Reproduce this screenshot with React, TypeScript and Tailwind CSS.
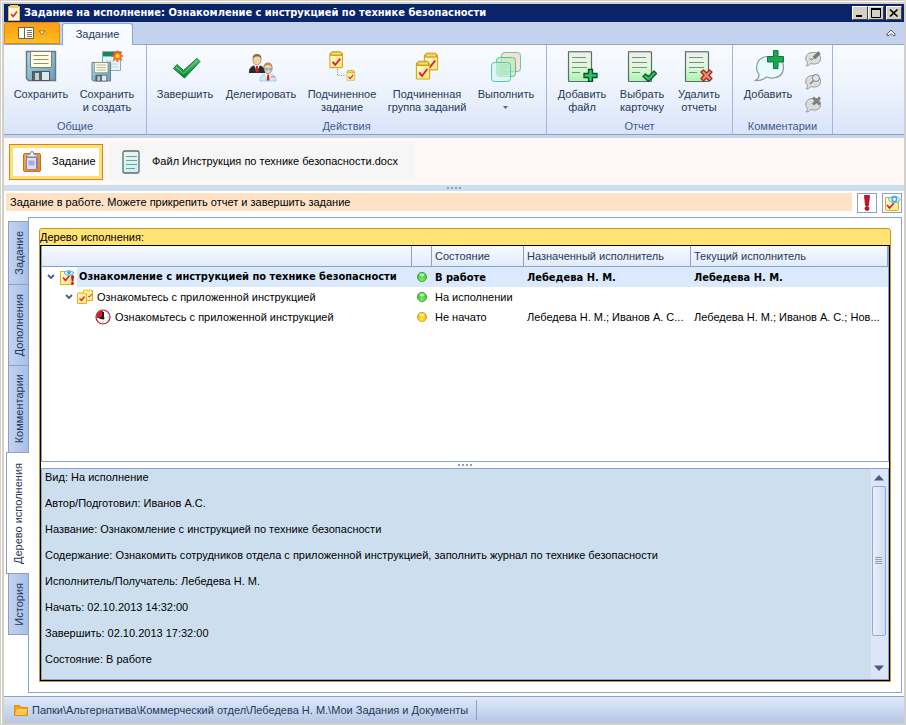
import type { ReactNode } from "react";

const bold = "font-['DejaVu_Sans_Condensed','Noto_Sans',sans-serif] font-bold";

/* ---------- icons ---------- */

function Defs() {
  return (
    <svg width="0" height="0" className="absolute" aria-hidden="true">
      <defs>
        <linearGradient id="steel" x1="0" y1="0" x2="1" y2="1">
          <stop offset="0" stopColor="#a9dcec" />
          <stop offset="0.5" stopColor="#86b9cd" />
          <stop offset="1" stopColor="#6f9fb6" />
        </linearGradient>
        <linearGradient id="paper" x1="0" y1="0" x2="0" y2="1">
          <stop offset="0" stopColor="#eef0ec" />
          <stop offset="0.5" stopColor="#dff9dc" />
          <stop offset="1" stopColor="#a9f5b0" />
        </linearGradient>
        <linearGradient id="paperBlue" x1="0" y1="0" x2="0" y2="1">
          <stop offset="0" stopColor="#eaf3f3" />
          <stop offset="1" stopColor="#c4f3fb" />
        </linearGradient>
        <linearGradient id="gold" x1="0" y1="0" x2="1" y2="1">
          <stop offset="0" stopColor="#fffbd8" />
          <stop offset="1" stopColor="#ffe66e" />
        </linearGradient>
        <linearGradient id="green" x1="0" y1="0" x2="0" y2="1">
          <stop offset="0" stopColor="#55c878" />
          <stop offset="1" stopColor="#07852f" />
        </linearGradient>
        <linearGradient id="bubble" x1="0" y1="0" x2="0" y2="1">
          <stop offset="0" stopColor="#dcfcfa" />
          <stop offset="1" stopColor="#eefaff" />
        </linearGradient>
        <radialGradient id="dotGreen" cx="0.5" cy="0.8" r="0.8">
          <stop offset="0" stopColor="#7cf35a" />
          <stop offset="1" stopColor="#2fb52c" />
        </radialGradient>
        <radialGradient id="dotYellow" cx="0.5" cy="0.8" r="0.8">
          <stop offset="0" stopColor="#ffe93a" />
          <stop offset="1" stopColor="#f0a80c" />
        </radialGradient>
        <linearGradient id="orangeBoard" x1="0" y1="0" x2="1" y2="1">
          <stop offset="0" stopColor="#f7a54e" />
          <stop offset="1" stopColor="#ee8420" />
        </linearGradient>
      </defs>
    </svg>
  );
}

function Svg({ w = 32, h = 32, children }: { w?: number; h?: number; children: ReactNode }) {
  return (
    <svg width={w} height={h} viewBox={`0 0 ${w} ${h}`} fill="none" className="shrink-0" aria-hidden="true">
      {children}
    </svg>
  );
}

function Floppy() {
  return (
    <>
      <path d="M1.5 1.5h29v29H3.5l-2-2z" fill="url(#steel)" stroke="#6b7480" strokeWidth="1.4" />
      <path d="M5.5 1.5h21v16h-21z" fill="#fffcdc" stroke="#76808a" />
      <path d="M8.5 5.5h15M8.5 9.5h15M8.5 13.5h15" stroke="#8d8f86" />
      <path d="M7.5 21.5h17v9h-17z" fill="#57636b" stroke="#4a555d" />
      <path d="M17 22h7v8h-7z" fill="#dfe7ec" />
      <path d="M10 23h4v7h-4z" fill="#c4ced6" />
    </>
  );
}

function SaveIcon() {
  return <Svg><Floppy /></Svg>;
}

function SaveNewIcon() {
  return (
    <Svg>
      <path d="M11.5 1.5h18v19h-18z" fill="#e3f6fb" stroke="#8fa9b7" />
      <path d="M12 2h17v4H12z" fill="#16895a" />
      <path d="M12 6h17v1H12z" fill="#75c9e8" />
      <path d="M15 11h12M15 14h12M15 17h12" stroke="#a9d8e4" />
      <g transform="translate(0 11.5) scale(.64)"><Floppy /></g>
      <path d="M26.500 .5l1.300 2.500 3-1.300-1.200 3 2.400 1.300-2.400 1.300 1.200 3-3-1.200-1.300 2.900-1.300-2.900-3 1.200 1.200-3-3-1.300 3-1.300-1.200-3 3 1.300z" fill="#ff7a12" stroke="#ef3b18" strokeWidth=".6" />
      <circle cx="26.500" cy="6" r="2" fill="#ffd23a" />
    </Svg>
  );
}

function DoneIcon() {
  return (
    <Svg>
      <path d="M4.500 18.500l3.500-4 6.500 6L28 8.500l3 3-15.500 16.500z" fill="url(#green)" stroke="#0c6b2b" strokeLinejoin="round" />
      <path d="M7 17l7.500 6.500L28 10.500" stroke="#7fdc98" strokeWidth="1" opacity=".7" />
    </Svg>
  );
}

function PeopleIcon() {
  return (
    <Svg>
      <path d="M4 22c0-4 3-7 8-7s8 3 8 7v1H4z" fill="#2a2a2e" />
      <path d="M9 15l3 7 3-7z" fill="#fff" />
      <path d="M11 16h2l.6 5L12 23l-1.600-2z" fill="#d81f26" />
      <ellipse cx="12" cy="10" rx="4" ry="5" fill="#f3d2a8" stroke="#8a6a3c" strokeWidth=".6" />
      <path d="M7.500 9c0-4 2-5 4.500-5s4.500 1 4.500 5c-1-2-2-2.500-4.500-2.500S8.500 7 7.500 9z" fill="#8a6a3c" />
      <path d="M15 30c0-4 3-6.500 8-6.500s8 2.500 8 6.500v1H15z" fill="#c9ebf8" stroke="#8fb8cc" strokeWidth=".6" />
      <path d="M20 23.500l3 6 3-6z" fill="#fff" />
      <path d="M22.200 24.500h1.800l.5 6h-2.800z" fill="#d81f26" />
      <path d="M26 26h4v1.500h-4z" fill="#f49b7b" />
      <ellipse cx="23" cy="18.500" rx="4" ry="5" fill="#f3d2a8" stroke="#8a6a3c" strokeWidth=".6" />
      <path d="M18.500 18c0-4 2-5.500 4.500-5.500s4.500 1.500 4.500 5.500c-1-2-2-3-4.500-3s-3.500 1-4.500 3z" fill="#b8904c" />
      <path d="M19.500 18.500h3v1.500h-3zM24 18.500h3v1.500h-3z" stroke="#5fa2c4" strokeWidth=".8" />
    </Svg>
  );
}

// yellow clipboard with a red tick, drawn in a 16x20 box
function Clip() {
  return (
    <>
      <path d="M2.500 2.500h12q1 0 1 1v14q0 1-1 1h-12q-1 0-1-1v-14q0-1 1-1z" fill="url(#gold)" stroke="#d9a520" strokeWidth="1.200" />
      <path d="M4 .7h9q.8 0 1 1l.5 3.300h-12L3 1.700q.2-1 1-1z" fill="#f0c22e" stroke="#b98a12" strokeWidth=".8" />
      <path d="M3.500 2.800h10" stroke="#fbe489" />
      <path d="M4.500 12l3 3.500 5.500-7" stroke="#d21f3c" strokeWidth="2" />
    </>
  );
}

function SubTaskIcon() {
  return (
    <Svg>
      <g transform="translate(2.500 1) scale(.9)"><Clip /></g>
      <path d="M11.500 19v6.500h7" stroke="#77808c" strokeDasharray="1 1.500" />
      <g transform="translate(20 20) scale(.56)"><Clip /></g>
    </Svg>
  );
}

function SubGroupIcon() {
  return (
    <Svg>
      <g transform="translate(12 2.500) scale(.94)"><Clip /></g>
      <g transform="translate(4 10.500) scale(.94 1)"><Clip /></g>
    </Svg>
  );
}

function StackIcon() {
  return (
    <Svg>
      <rect x="11.500" y="2.500" width="19" height="19" rx="3" fill="#fbdcd2" fillOpacity=".9" stroke="#62c9a2" />
      <rect x="6.500" y="7.500" width="19" height="19" rx="3" fill="#b9ecb4" fillOpacity=".7" stroke="#55c39a" />
      <rect x="1.500" y="12.500" width="19" height="19" rx="3" fill="#d5f5f0" fillOpacity=".7" stroke="#55c3ae" />
      <rect x="7.500" y="13.500" width="12" height="12" fill="#8bdca0" fillOpacity=".45" />
    </Svg>
  );
}

function Report({ children }: { children?: ReactNode }) {
  return (
    <Svg>
      <path d="M3.500 1.500h21q1 0 1 1v28q0 1-1 1h-21q-1 0-1-1v-28q0-1 1-1z" fill="url(#paper)" stroke="#5f6a6a" strokeWidth="1.200" />
      <path d="M3 2h22" stroke="#8f9696" />
      <path d="M6 7.500h14M6 12.500h15M6 17.500h15M6 22.500h8" stroke="#7d9080" />
      {children}
    </Svg>
  );
}

const plusPath = "M22.500 19.500h4v4h4.500v4h-4.500v4h-4v-4H18v-4h4.500z";

function AddFileIcon() {
  return <Report><path d={plusPath} fill="#2fc26a" stroke="#05502a" strokeWidth="1.300" /></Report>;
}

function PickCardIcon() {
  return <Report><path d="M17 26.500l2.500-2.500 3 2.500 5.500-5.500 2.500 2.500-8 8z" fill="#39bd62" stroke="#0c5a2c" strokeWidth="1.300" strokeLinejoin="round" /></Report>;
}

function DeleteReportIcon() {
  return (
    <Report>
      <path d="M18.500 21.500l2-1.500 3 3 3-3 2.500 2-3 3.200 3 3.300-2.500 2.500-3-3-3 3-2.500-2.500 3-3.300-3-3z" fill="#f08a70" stroke="#a8281c" strokeWidth="1.300" strokeLinejoin="round" />
    </Report>
  );
}

function AddCommentIcon() {
  return (
    <Svg>
      <path d="M15 6.500h6q10.500 1 10.500 10.500 0 10-10 11-4 .4-7-1Q10 31 3.500 30.500q4-2.500 3.500-6-2.500-3-2.500-7Q5 7.500 15 6.500z" fill="url(#bubble)" stroke="#8d989d" strokeWidth="1.200" />
      <path d="M21.500.5h4.500v6h5.500V12H26v6.500h-4.500V12h-6V6.500h6z" fill="#1fa556" stroke="#0a7a3a" />
    </Svg>
  );
}

function GreyBubble({ children }: { children: ReactNode }) {
  return (
    <Svg w={18} h={17}>
      <path d="M7.500 2.500h4q5 1 5 6 0 5-5.500 5.500-2.500.2-4-.5-2 2.500-5 2.500 1.500-1.500 1.500-3.500Q1.500 10.500 1.700 8 2.500 3 7.500 2.500z" fill="#dcdcdc" stroke="#9b9b9b" />
      {children}
    </Svg>
  );
}

function EditCommentIcon() {
  return (
    <GreyBubble>
      <path d="M10 8l5.500-5.500" stroke="#777" strokeWidth="3.500" />
      <path d="M5.500 8.500l2 1.500L10 8" stroke="#777" />
    </GreyBubble>
  );
}

function FindCommentIcon() {
  return (
    <GreyBubble>
      <circle cx="12" cy="5" r="3.500" fill="#e4e4e4" stroke="#858585" />
      <path d="M9.500 7.500L6 11" stroke="#858585" strokeWidth="1.600" />
    </GreyBubble>
  );
}

function DropCommentIcon() {
  return <GreyBubble><path d="M9 1.500l7 7M16 1.500l-7 7" stroke="#7f7f7f" strokeWidth="3" /></GreyBubble>;
}

function BoardIcon() {
  return (
    <Svg w={20} h={23}>
      <rect x="1.500" y="3.500" width="17" height="18" rx="1.500" fill="url(#orangeBoard)" stroke="#cf6d14" />
      <path d="M4.500 7.500h10v12h-10z" fill="#dfe0f4" stroke="#7f84ad" />
      <path d="M6.500 10.500h6v5h-6z" fill="#a9aed4" />
      <path d="M14 20l1.500-1.500V8" stroke="#7f84ad" />
      <path d="M4.500 7V5.500L8 4q0-2.500 2-2.500T12 4l3.500 1.500V7z" fill="#e8e8ee" stroke="#85858f" />
    </Svg>
  );
}

function DocIcon() {
  return (
    <Svg w={18} h={24}>
      <rect x="1" y="1" width="16" height="22" rx="1.500" fill="url(#paperBlue)" stroke="#5f6a6e" strokeWidth="1.300" />
      <path d="M4 6.500h11M4 10.500h11M4 14.500h11M4 18.500h9" stroke="#6fa387" />
    </Svg>
  );
}

function TitleIcon() {
  return (
    <Svg w={12} h={16}>
      <path d="M.5 1.500h11v14H.5z" fill="#fff6dc" stroke="#e6b84a" />
      <path d="M2 0h8v3H2z" fill="#f3cf5a" />
      <path d="M3 9l2.200 2.500L9 6.500" stroke="#c33a2c" strokeWidth="1.600" />
    </Svg>
  );
}

function Eye() {
  return (
    <>
      <path d="M5 5q4-5 10 0-6 5-10 0z" fill="#e6f7ff" stroke="#58b7e6" />
      <circle cx="10" cy="4.800" r="1.800" fill="#3aa0da" />
    </>
  );
}

function TaskEyeIcon() {
  return (
    <Svg w={16} h={18}>
      <path d="M1.500 3.500h12v13h-12z" fill="url(#gold)" stroke="#e0b023" />
      <path d="M4 9.500l2.500 3 4-5" stroke="#d21f3c" strokeWidth="1.500" />
      <Eye />
      <path d="M12 7.500h3l-.6 6h-1.800z" fill="#c8102e" />
      <circle cx="13.500" cy="15.500" r="1.400" fill="#c8102e" />
    </Svg>
  );
}

function WatchIcon() {
  return (
    <Svg w={18} h={18}>
      <path d="M2.500 3.500h13v12q0 1-1 1h-11q-1 0-1-1z" fill="url(#gold)" stroke="#dcae24" />
      <path d="M4 11l2.500 3L11 9" stroke="#c8203a" strokeWidth="1.600" />
      <path d="M5 5.500q6-7 12.500 0-6.500 7-12.500 0z" fill="#dff4ff" stroke="#58b7e6" />
      <circle cx="11.300" cy="5.200" r="2.300" fill="#fff" stroke="#3aa0da" strokeWidth="1.400" />
    </Svg>
  );
}

function GroupRowIcon() {
  return (
    <Svg w={16} h={16}>
      <path d="M6.500 1.500h9v10h-9z" fill="url(#gold)" stroke="#e0b023" />
      <path d="M7.500.5h6v2h-6z" fill="#f7d640" />
      <path d="M11 7l1.500 1L15 5" stroke="#d21f3c" />
      <path d="M.5 4.500h9v10h-9z" fill="url(#gold)" stroke="#e0b023" />
      <path d="M1.500 3h6v2h-6z" fill="#f7d640" />
      <path d="M2.500 9.500l2 2 3-4" stroke="#d21f3c" strokeWidth="1.300" />
    </Svg>
  );
}

function ClockIcon() {
  return (
    <Svg w={16} h={16}>
      <circle cx="8" cy="8" r="7" fill="#fff" stroke="#b0242c" strokeWidth="1.200" />
      <path d="M8 9V1.500A6.500 6.500 0 0 0 1.500 9z" fill="#c4202a" />
      <path d="M4.500 9H8M8 3v6" stroke="#1c1c1c" strokeWidth="2" />
      <circle cx="8" cy="9" r="1.500" fill="#1c1c1c" />
      <path d="M8 12.500v1M12.500 8h1" stroke="#777" />
    </Svg>
  );
}

function Dot({ color }: { color: "green" | "yellow" }) {
  const green = color === "green";
  return (
    <Svg w={12} h={12}>
      <circle cx="6" cy="6" r="4.600" fill={green ? "url(#dotGreen)" : "url(#dotYellow)"} stroke={green ? "#2c9a2a" : "#d2940c"} strokeWidth=".8" />
      <ellipse cx="6" cy="3.800" rx="2.700" ry="1.600" fill="#fff" fillOpacity=".65" />
    </Svg>
  );
}

function Chevron() {
  return (
    <Svg w={8} h={6}>
      <path d="M1 1l3 3 3-3" stroke="#4c5a86" strokeWidth="1.800" />
    </Svg>
  );
}

function Grip() {
  return (
    <div className="flex gap-0.5">
      {[0, 1, 2, 3].map((i) => (
        <span key={i} className="size-0.5 bg-[#8c9dc8]" />
      ))}
    </div>
  );
}

/* ---------- window parts ---------- */

function TitleBar() {
  const btn =
    "flex h-[14px] w-4 items-center justify-center border border-t-white border-l-white border-r-[#404040] border-b-[#404040] bg-[#d4d0c8]";
  return (
    <header className="flex h-[18px] items-center bg-[#0a246a] pr-0.5 pl-1">
      <TitleIcon />
      <h1 className={`${bold} ml-1 flex-1 truncate text-[11px] leading-[18px] text-white`}>
        Задание на исполнение: Ознакомление с инструкцией по технике безопасности
      </h1>
      <button className={btn} aria-label="Свернуть">
        <Svg w={10} h={10}><path d="M1 8h6" stroke="#000" strokeWidth="2" /></Svg>
      </button>
      <button className={btn} aria-label="Развернуть">
        <Svg w={10} h={10}><path d="M.5 1.500h9v8h-9z" stroke="#000" /><path d="M0 1h10" stroke="#000" strokeWidth="2" /></Svg>
      </button>
      <button className={`${btn} ml-0.5`} aria-label="Закрыть">
        <Svg w={10} h={10}><path d="M1 1.500l7.500 7M8.500 1.500L1 8.500" stroke="#000" strokeWidth="1.700" /></Svg>
      </button>
    </header>
  );
}

function RibbonTabs() {
  return (
    <div className="flex h-[23px] items-end border-b border-[#8ba6cf] bg-[#c3d3ee]">
      <button className="flex h-[22px] w-14 items-center justify-center gap-1 rounded-t-[3px] border border-[#e08708] bg-gradient-to-b from-[#f9a021] via-[#fdab10] to-[#ffc02c]" aria-label="Меню">
        <Svg w={16} h={12}>
          <path d="M.5.5h15v11H.5z" fill="#fff" stroke="#6d5f4d" />
          <path d="M6.500 0v12" stroke="#6d5f4d" />
          <path d="M9 3.500h5M9 5.500h5M9 7.500h5M9 9.500h5" stroke="#6d5f4d" strokeWidth=".9" />
        </Svg>
        <Svg w={8} h={6}><path d="M1 1h6L4 4.500z" fill="#fff" stroke="#7d5a20" strokeWidth=".8" /></Svg>
      </button>
      <button className="-mb-px ml-0.5 h-[22px] w-[71px] rounded-t-[3px] border border-b-0 border-[#8ba6cf] bg-[#f7faff] text-[#1e395b]">
        Задание
      </button>
      <button className="mr-2 ml-auto flex h-[22px] items-center" aria-label="Свернуть ленту">
        <Svg w={10} h={8}>
          <path d="M1 5l4-4 4 4v1.500H7L5 4.500 3 6.500H1z" fill="#fff" stroke="#4c5675" />
        </Svg>
      </button>
    </div>
  );
}

type Action = { lines: string[]; icon: ReactNode; width: string; menu?: boolean };

function RibbonButton({ lines, icon, width, menu }: Action) {
  return (
    <button className={`${width} flex flex-col items-center gap-1.5 leading-[13px] whitespace-nowrap text-[#1e395b]`}>
      {icon}
      <span className="flex flex-col items-center">
        {lines.map((l) => (
          <span key={l}>{l}</span>
        ))}
        {menu && (
          <span className="flex h-[13px] items-center">
            <Svg w={5} h={3}><path d="M0 0h5L2.500 3z" fill="#56627c" /></Svg>
          </span>
        )}
      </span>
    </button>
  );
}

function RibbonGroup({ title, actions, pad, children }: { title: string; actions: Action[]; pad: string; children?: ReactNode }) {
  return (
    <section className="flex flex-col border-r border-[#a3b6da]">
      <div className={`${pad} flex flex-1 pt-[5px]`}>
        {actions.map((a) => (
          <RibbonButton key={a.lines.join()} {...a} />
        ))}
        {children}
      </div>
      <h2 className="mb-px text-center leading-[13px] text-[#3e5a8e]">{title}</h2>
    </section>
  );
}

function Ribbon() {
  return (
    <div className="flex h-[90px] border-b border-[#8ba2c8] bg-gradient-to-b from-[#f9fbff] via-[#edf3fd] to-[#d9e4f9]">
      <RibbonGroup
        title="Общие"
        pad="pl-1 pr-1.5"
        actions={[
          { lines: ["Сохранить"], icon: <SaveIcon />, width: "w-[66px]" },
          { lines: ["Сохранить", "и создать"], icon: <SaveNewIcon />, width: "w-[66px]" },
        ]}
      />
      <RibbonGroup
        title="Действия"
        pad="pr-[3px]"
        actions={[
          { lines: ["Завершить"], icon: <DoneIcon />, width: "w-[76px]" },
          { lines: ["Делегировать"], icon: <PeopleIcon />, width: "w-[76px]" },
          { lines: ["Подчиненное", "задание"], icon: <SubTaskIcon />, width: "w-[86px]" },
          { lines: ["Подчиненная", "группа заданий"], icon: <SubGroupIcon />, width: "w-[84px]" },
          { lines: ["Выполнить"], icon: <StackIcon />, width: "w-[74px]", menu: true },
        ]}
      />
      <RibbonGroup
        title="Отчет"
        pad="pl-[5px] pr-1.5"
        actions={[
          { lines: ["Добавить", "файл"], icon: <AddFileIcon />, width: "w-[60px]" },
          { lines: ["Выбрать", "карточку"], icon: <PickCardIcon />, width: "w-[60px]" },
          { lines: ["Удалить", "отчеты"], icon: <DeleteReportIcon />, width: "w-[54px]" },
        ]}
      />
      <RibbonGroup title="Комментарии" pad="pl-[5px] pr-2.5" actions={[{ lines: ["Добавить"], icon: <AddCommentIcon />, width: "w-[60px]" }]}>
        <div className="ml-1.5 flex flex-col gap-1.5">
          <button aria-label="Изменить комментарий"><EditCommentIcon /></button>
          <button aria-label="Просмотреть комментарий"><FindCommentIcon /></button>
          <button aria-label="Удалить комментарий"><DropCommentIcon /></button>
        </div>
      </RibbonGroup>
    </div>
  );
}

function DocTabs() {
  return (
    <nav className="flex h-[47px] items-center gap-1.5 bg-[#fff8f7] px-[5px]">
      <button className="flex h-[36px] w-[94px] items-center border border-[#c48a2a] bg-[#ffe072] p-[3px] text-black">
        <span className="flex h-full w-full items-center gap-2.5 bg-white pl-[9px]">
          <BoardIcon />
          Задание
        </span>
      </button>
      <button className="flex h-[38px] items-center gap-3 bg-[#f6f6f6] pr-[17px] pl-[13px] text-black">
        <DocIcon />
        Файл Инструкция по технике безопасности.docx
      </button>
    </nav>
  );
}

const sideTabs = [
  { name: "Задание", h: "h-16" },
  { name: "Дополнения", h: "h-[82px]" },
  { name: "Комментарии", h: "h-[88px]" },
  { name: "Дерево исполнения", h: "h-[122px]" },
  { name: "История", h: "h-[62px]" },
];

function SideTabs() {
  return (
    <nav className="z-10 -mr-px flex flex-col items-end pt-1">
      {sideTabs.map(({ name, h }) => {
        const active = name === "Дерево исполнения";
        return (
          <button
            key={name}
            className={`${h} ${
              active ? "w-[23px] border-r-0 bg-white" : "w-[21px] bg-gradient-to-r from-[#c2d3f0] to-[#a9bfe6]"
            } -mb-px flex shrink-0 items-center justify-center border border-[#8ba2c8] text-[#1e395b]`}
          >
            <span className="rotate-180 leading-[16px] whitespace-nowrap [writing-mode:vertical-rl]">{name}</span>
          </button>
        );
      })}
    </nav>
  );
}

const rows = [
  {
    level: "pl-[5px]",
    name: "Ознакомление с инструкцией по технике безопасности",
    icon: <TaskEyeIcon />,
    dot: "green" as const,
    state: "В работе",
    assigned: "Лебедева Н. М.",
    current: "Лебедева Н. М.",
    open: true,
    selected: true,
  },
  {
    level: "pl-[23px]",
    name: "Ознакомьтесь с приложенной инструкцией",
    icon: <GroupRowIcon />,
    dot: "green" as const,
    state: "На исполнении",
    assigned: "",
    current: "",
    open: true,
  },
  {
    level: "pl-[53px]",
    name: "Ознакомьтесь с приложенной инструкцией",
    icon: <ClockIcon />,
    dot: "yellow" as const,
    state: "Не начато",
    assigned: "Лебедева Н. М.; Иванов А. С...",
    current: "Лебедева Н. М.; Иванов А. С.; Нов...",
  },
];

function TreeTable() {
  const th = "h-[21px] border-r border-b border-[#8ba2c8] px-[3px] text-left font-normal";
  return (
    <table className="w-full table-fixed border-separate border-spacing-0">
      <colgroup>
        <col />
        <col className="w-5" />
        <col className="w-[92px]" />
        <col className="w-[167px]" />
        <col className="w-[197px]" />
      </colgroup>
      <thead className="bg-gradient-to-b from-[#f6f9ff] to-[#e2ebfb] text-[#1e395b]">
        <tr>
          <th className={th} aria-label="Название" />
          <th className={th} aria-label="Индикатор" />
          <th className={th}>Состояние</th>
          <th className={th}>Назначенный исполнитель</th>
          <th className={th}>Текущий исполнитель</th>
        </tr>
      </thead>
      <tbody>
        {rows.map((r, i) => {
          const tone = r.selected ? `${bold} bg-[#dbe9fc]` : "";
          return (
            <tr key={i} className="h-5">
              <td className={r.selected ? bold : ""}>
                <div className={`${r.level} flex h-5 items-center`}>
                  {r.open && <Chevron />}
                  <span className={r.open ? "ml-1 flex" : "flex"}>{r.icon}</span>
                  <span className={`${r.selected ? "bg-[#dbe9fc]" : ""} ml-0.5 h-5 flex-1 truncate pl-0.5 leading-5`}>{r.name}</span>
                </div>
              </td>
              <td className={tone}>
                <div className="flex justify-center"><Dot color={r.dot} /></div>
              </td>
              <td className={`${tone} truncate px-[3px]`}>{r.state}</td>
              <td className={`${tone} px-[3px] whitespace-nowrap`}>{r.assigned}</td>
              <td className={`${tone} px-[3px] whitespace-nowrap`}>{r.current}</td>
            </tr>
          );
        })}
      </tbody>
    </table>
  );
}

const details = [
  "Вид: На исполнение",
  "Автор/Подготовил: Иванов А.С.",
  "Название: Ознакомление с инструкцией по технике безопасности",
  "Содержание: Ознакомить сотрудников отдела с приложенной инструкцией, заполнить журнал по технике безопасности",
  "Исполнитель/Получатель: Лебедева Н. М.",
  "Начать: 02.10.2013 14:32:00",
  "Завершить: 02.10.2013 17:32:00",
  "Состояние: В работе",
];

function Details() {
  return (
    <div className="flex border border-[#8ba2c8] bg-[#cddfef]">
      <div className="flex-1 pt-0.5 pl-[3px]">
        {details.map((d) => (
          <p key={d} className="mb-[13px] leading-[13px] text-black">{d}</p>
        ))}
      </div>
      <div className="flex w-[17px] flex-col items-center bg-[#dce6f8] py-1.5 pr-0.5">
        <button className="flex h-[11px]" aria-label="Вверх"><Svg w={10} h={6}><path d="M0 5.500h10L5 0z" fill="#4a5884" /></Svg></button>
        <div className="flex w-3.5 flex-[5] items-center justify-center rounded-[2px] border border-[#8fa9d8] bg-gradient-to-r from-[#e9effc] to-[#d3def5]">
          <Svg w={7} h={8}><path d="M0 .5h7M0 2.500h7M0 4.500h7M0 6.500h7" stroke="#8c9dc8" /></Svg>
        </div>
        <div className="flex-1" />
        <button className="flex h-2" aria-label="Вниз"><Svg w={10} h={6}><path d="M0 .5h10L5 6z" fill="#4a5884" /></Svg></button>
      </div>
    </div>
  );
}

export default function App() {
  return (
    <div className="flex min-h-screen flex-col border border-[#d4d0c8] bg-[#d4d0c8] font-['Liberation_Sans',Arial,sans-serif] text-[11px] leading-[13px]">
      <Defs />
      <div className="flex flex-1 flex-col border-t border-l border-white pt-0.5 pr-px pb-px pl-0.5">
        <TitleBar />
        <RibbonTabs />
        <Ribbon />
        <div className="h-[3px] bg-[#c9d6ea]" />
        <DocTabs />
        <div className="flex h-1.5 items-center justify-center bg-[#cddfef]"><Grip /></div>

        <main className="flex flex-1 flex-col bg-white pt-0.5 pb-[3px]">
          <div className="flex items-start gap-[5px] pr-0.5 pl-0.5">
            <p className="h-[18px] flex-1 bg-[#ffe2c6] pl-1 leading-[18px] text-black">
              Задание в работе. Можете прикрепить отчет и завершить задание
            </p>
            <button className="flex h-5 w-5 items-center justify-center border border-[#8ba2c8] bg-white" aria-label="Важно">
              <Svg w={8} h={16}>
                <path d="M1.500.5h5l-1 10h-3z" fill="#c8142c" stroke="#8c0c1c" strokeWidth=".8" />
                <circle cx="4" cy="13.500" r="2" fill="#c8142c" stroke="#8c0c1c" strokeWidth=".8" />
              </Svg>
            </button>
            <button className="flex h-5 w-5 items-center justify-center border border-[#8ba2c8] bg-white" aria-label="Наблюдение">
              <WatchIcon />
            </button>
          </div>

          <div className="mt-1 flex flex-1 pr-0.5 pl-0.5">
            <SideTabs />
            <div className="flex min-w-0 flex-1 flex-col border border-[#8ba2c8] bg-white p-2.5">
              <section className="flex flex-1 flex-col rounded-t-[3px] border border-[#c9922b] bg-[#ffe374]">
                <h2 className="h-4 leading-4 text-black">Дерево исполнения:</h2>
                <div className="flex flex-1 flex-col border border-black bg-white">
                  <div className="flex-1 border border-t-0 border-[#8ba2c8]">
                    <TreeTable />
                  </div>
                  <div className="flex h-1.5 items-center justify-center"><Grip /></div>
                  <Details />
                </div>
              </section>
            </div>
          </div>
        </main>

        <footer className="flex h-[27px] items-center border-t border-[#8ba2c8] bg-gradient-to-b from-[#dfe9fb] to-[#b6c7e4] pl-2.5 text-[#1e395b]">
          <Svg w={14} h={12}>
            <path d="M.5 1.500h5l1 2h7v8H.5z" fill="#f6a21c" stroke="#e28a12" />
            <path d="M1 11l1.500-6H13l-1 6z" fill="#ffc653" />
          </Svg>
          <a href="#" className="ml-1 border-r border-[#8ba2c8] pr-2 leading-5 text-[#1e395b]">
            Папки\Альтернатива\Коммерческий отдел\Лебедева Н. М.\Мои Задания и Документы
          </a>
        </footer>
      </div>
    </div>
  );
}
